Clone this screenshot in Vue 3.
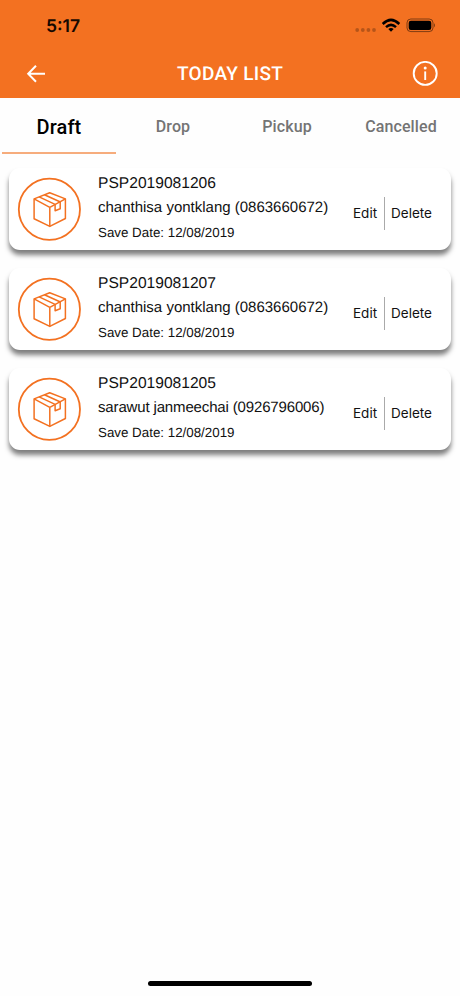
<script setup>
import { ref } from 'vue'

const tabs = ['Draft', 'Drop', 'Pickup', 'Cancelled']
const active = ref('Draft')
const parcels = [
  { code: 'PSP2019081206', name: 'chanthisa yontklang', phone: '0863660672', date: '12/08/2019' },
  { code: 'PSP2019081207', name: 'chanthisa yontklang', phone: '0863660672', date: '12/08/2019' },
  { code: 'PSP2019081205', name: 'sarawut janmeechai', phone: '0926796006', date: '12/08/2019' },
]
</script>

<template>
  <div class="screen">
    <header class="header">
      <div class="status">
        <span class="time">5:17</span>
        <svg class="status-icons" width="82" height="16" viewBox="0 0 82 16">
          <g fill="#000" fill-opacity="0.25">
            <circle cx="4.2" cy="13" r="1.9" />
            <circle cx="9.8" cy="13" r="1.9" />
            <circle cx="15.4" cy="13" r="1.9" />
            <circle cx="21" cy="13" r="1.9" />
          </g>
          <g fill="none" stroke="#000" stroke-width="2.5">
            <path d="M29.7 7 Q38 -1.2 46.3 7" />
            <path d="M33 10.2 Q38 5.6 43 10.2" />
          </g>
          <path d="M35.3 12 Q38 9.8 40.7 12 L38 14.7Z" fill="#000" />
          <rect x="54" y="2" width="26" height="12.6" rx="3.8" fill="none" stroke="#000" stroke-opacity="0.48" stroke-width="1" />
          <rect x="55.7" y="3.7" width="22.6" height="9.2" rx="2.2" fill="#000" />
          <path d="M81 6.3 Q82 7 82 8.3 Q82 9.6 81 10.3Z" fill="#000" fill-opacity="0.45" />
        </svg>
      </div>
      <div class="bar">
        <svg class="back" width="20" height="20" viewBox="0 0 20 20" fill="none" stroke="#fff" stroke-width="2">
          <path d="M10 1.8 L2.2 9.8 L10 17.8 M2.2 9.8 H19" />
        </svg>
        <h1 class="title">TODAY LIST</h1>
        <svg class="info" width="26" height="26" viewBox="0 0 26 26">
          <circle cx="13.2" cy="12.4" r="11.5" fill="none" stroke="#fff" stroke-width="1.9" />
          <circle cx="13.2" cy="7.1" r="1.5" fill="#fff" />
          <path d="M13.2 10.4 V19" stroke="#fff" stroke-width="1.9" />
        </svg>
      </div>
    </header>

    <nav class="tabs">
      <button
        v-for="tab in tabs"
        :key="tab"
        class="tab"
        :class="{ active: tab === active }"
        @click="active = tab"
      >{{ tab }}</button>
    </nav>

    <main class="list">
      <article v-for="p in parcels" :key="p.code" class="card">
        <svg class="parcel" width="64" height="64" viewBox="0 0 64 64" fill="none" stroke="#f37121" stroke-linejoin="round">
          <circle cx="32.4" cy="32.3" r="30.6" stroke-width="1.8" />
          <g stroke-width="1.5">
            <path d="M32.7 15.7 L48.4 21.9 V41.5 L32.8 49.4 L17.1 41.8 V21.9 Z" />
            <path d="M17.1 21.9 L32.8 30.4 L48.4 21.9 M32.8 30.4 V49.4" />
            <path d="M22.1 19.9 L38.1 27.4 M27.4 17.8 L43.4 25" />
            <path d="M38.1 27.4 V33.8 L43.2 31.8 V25" />
          </g>
        </svg>
        <div class="details">
          <div class="code">{{ p.code }}</div>
          <div class="person">{{ p.name }} ({{ p.phone }})</div>
          <div class="date">Save Date: {{ p.date }}</div>
        </div>
        <div class="actions">
          <button class="action edit">Edit</button>
          <button class="action delete">Delete</button>
        </div>
      </article>
    </main>

    <div class="home-indicator"></div>
  </div>
</template>

<style>
body {
  margin: 0;
  background: #fff;
}
</style>

<style scoped>
.screen {
  display: flex;
  flex-direction: column;
  width: 460px;
  height: 996px;
  overflow: hidden;
  background: #fefefe;
  font-family: "Liberation Sans", Arial, sans-serif;
  color: #111;
  text-rendering: geometricPrecision;
}
.header {
  box-sizing: border-box;
  height: 98px;
  flex: none;
  background: #f37121;
}
.status {
  display: flex;
  justify-content: space-between;
  height: 49px;
  padding: 0 25px 0 46px;
}
.time {
  margin-top: 16px;
  font: 600 17.5px/22px Inter, sans-serif;
  color: #160800;
}
.status-icons {
  margin-top: 17px;
}
.bar {
  display: flex;
  align-items: center;
  justify-content: space-between;
  height: 49px;
  padding: 0 22px 0 26px;
}
.title {
  margin: 0 0 0 2px;
  font: 500 19px/24px Roboto, sans-serif;
  letter-spacing: 0.3px;
  color: #fff;
}
.tabs {
  display: grid;
  grid-template-columns: repeat(4, 114px);
  height: 56px;
  flex: none;
  padding-left: 2px;
}
.tab {
  border: 0;
  border-bottom: 2px solid transparent;
  padding: 4px 0 0;
  background: none;
  font: 500 16px/20px Roboto, sans-serif;
  letter-spacing: 0.1px;
  color: #747474;
}
.tab.active {
  border-bottom-color: #f6ac7c;
  font-size: 20px;
  color: #000;
}
.list {
  display: flex;
  flex-direction: column;
  gap: 18px;
  flex: 1;
  padding: 14px 9px 0;
}
.card {
  display: flex;
  box-sizing: border-box;
  height: 82px;
  padding: 0 12px 0 8px;
  border-radius: 11px;
  background: #fff;
  box-shadow: 0 5px 5px rgba(0, 0, 0, 0.5);
}
.parcel {
  flex: none;
  margin-top: 9px;
}
.details {
  flex: 1;
  margin-left: 17px;
  white-space: nowrap;
}
.code {
  margin-top: 6px;
  font-size: 15.6px;
  line-height: 20px;
}
.person {
  margin-top: 4px;
  font-size: 15px;
  line-height: 20px;
}
.card:last-child .person {
  letter-spacing: -0.15px;
}
.date {
  margin-top: 5px;
  font-size: 13.35px;
  line-height: 20px;
}
.actions {
  display: flex;
  height: 33px;
  margin-top: 29px;
}
.action {
  border: 0;
  padding: 0 7px 0 6px;
  background: none;
  font: 400 13.5px/33px Inter, sans-serif;
  color: #111;
}
.edit {
  border-right: 1px solid #aaa;
}
.home-indicator {
  align-self: center;
  flex: none;
  width: 164px;
  height: 5px;
  margin-bottom: 10px;
  border-radius: 3px;
  background: #000;
}
</style>
